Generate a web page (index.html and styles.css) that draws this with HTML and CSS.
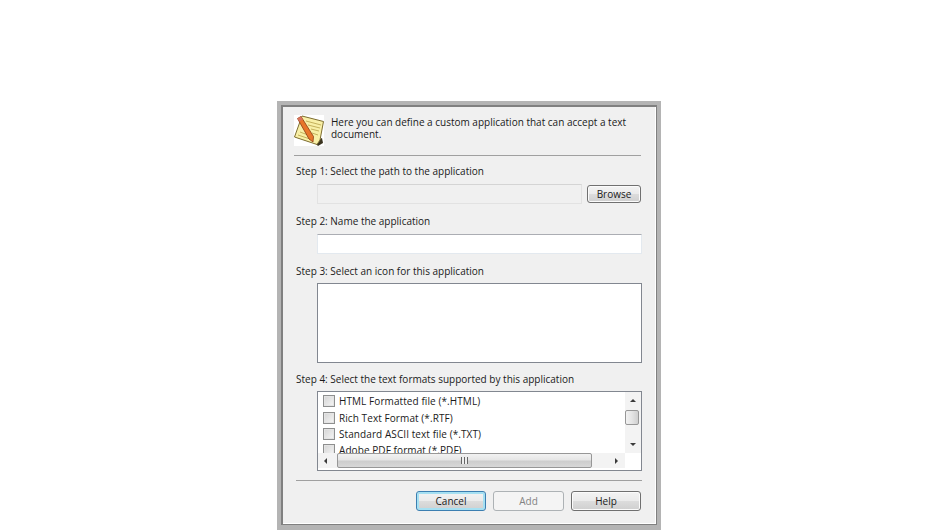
FILE: index.html
```html
<!DOCTYPE html>
<html lang="en">
<head>
  <meta charset="UTF-8" />
  <title>Custom application</title>
  <link rel="stylesheet" href="styles.css">
</head>
<body>

<div class="dialog">
  <div class="inner">
    <div class="intro">
      <svg class="note-icon" width="30" height="31" viewBox="0 0 30 31">
        <rect width="30" height="31" fill="#fff"/>
        <path d="M20 27 L28 23 L29 28 L24 31 Z" fill="#3a3320"/>
        <path d="M8 1 L29.5 6.5 L26 25 L23 29.5 L0.5 22 Z" fill="#f8efa6" stroke="#7d6d30"/>
        <path d="M12 6 L27 10 M14 10 L26 13 M17 14 L25 16 M18 18 L24 20 M6 17 L14 20 M4 20 L19 25" stroke="#c4b15c"/>
        <path d="M3.5 3.5 L7 1.5 L19.5 21.5 L19 27 L15 24 Z" fill="#e8762a" stroke="#8a3b14" stroke-width="0.8"/>
        <path d="M3.5 3.5 L7 1.5 L8.8 4.5 L5.3 6.5 Z" fill="#d9735e"/>
      </svg>
      <p class="intro-text">Here you can define a custom application that can accept a text document.</p>
    </div>
    <hr class="rule rule-top">

    <label class="step step-one">Step 1: Select the path to the application</label>
    <div class="path-row">
      <input class="field field-off" type="text" disabled>
      <button class="btn browse">Browse</button>
    </div>

    <label class="step">Step 2: Name the application</label>
    <input class="field name" type="text">

    <label class="step">Step 3: Select an icon for this application</label>
    <div class="icon-box"></div>

    <label class="step step-four">Step 4: Select the text formats supported by this application</label>
    <div class="formats">
      <div class="format-main">
        <ul class="format-list">
          <li><span class="check"></span>HTML Formatted file (*.HTML)</li>
          <li><span class="check"></span>Rich Text Format (*.RTF)</li>
          <li><span class="check"></span>Standard ASCII text file (*.TXT)</li>
          <li><span class="check"></span>Adobe PDF format (*.PDF)</li>
        </ul>
        <div class="vscroll">
          <span class="arrow up"></span>
          <span class="vthumb"></span>
          <span class="arrow down"></span>
        </div>
      </div>
      <div class="hscroll">
        <span class="arrow left"></span>
        <span class="hthumb"><span class="grip"></span></span>
        <span class="arrow right"></span>
      </div>
    </div>

    <hr class="rule rule-low">
    <div class="actions">
      <button class="btn cancel">Cancel</button>
      <button class="btn add" disabled>Add</button>
      <button class="btn help">Help</button>
    </div>
  </div>
</div>

</body>
</html>
```
FILE: styles.css
```css
html, body {
  margin: 0;
  height: 530px;
  overflow: hidden;
  background: #fff;
}
body {
  font-family: "Open Sans", sans-serif;
  font-size: 10px;
  color: #1a1a1a;
  padding-top: 101px;
  box-sizing: border-box;
}
.dialog {
  width: 384px;
  height: 429px;
  margin-left: 277px;
  box-sizing: border-box;
  border: 4px solid #b4b4b4;
  border-bottom-width: 5px;
}
.inner {
  height: 100%;
  box-sizing: border-box;
  background: #f0f0f0;
  border: 2px solid #808080;
  border-right-width: 1px;
  border-bottom-width: 1px;
  box-shadow: inset -1px -1px 0 #fff;
  padding: 8px 0 0 11px;
}
.intro {
  display: flex;
  gap: 7px;
  height: 31px;
}
.intro-text {
  margin: 1px 0 0;
  line-height: 12px;
  width: 300px;
}
.rule {
  border: 0;
  border-top: 1px solid #a0a0a0;
  margin: 0;
}
.rule-top {
  width: 347px;
  margin-top: 9px;
}
.rule-low {
  width: 346px;
  margin: 9px 0 0 2px;
}
.step {
  display: block;
  height: 15px;
  line-height: 15px;
  margin: 10px 0 4px 2px;
}
.step-one {
  margin-top: 8px;
  margin-bottom: 5px;
}
.step-four {
  margin-top: 9px;
}
.field {
  display: block;
  box-sizing: border-box;
  height: 20px;
  margin: 0;
  padding: 0;
  border: 1px solid #e3e9ef;
  border-top-color: #abadb3;
  background: #fff;
}
.name {
  width: 325px;
  margin-left: 23px;
  margin-top: 5px;
}
.path-row {
  display: flex;
  gap: 5px;
  margin-left: 23px;
}
.field-off {
  width: 265px;
  background: #f0f0f0;
  border-color: #e2e2e2;
  border-top-color: #d4d4d4;
}
.btn {
  font: inherit;
  box-sizing: border-box;
  height: 20px;
  padding: 0;
  color: #1a1a1a;
  border: 1px solid #707070;
  border-radius: 3px;
  background: linear-gradient(#f3f3f3, #ebebeb 48%, #dcdcdc 52%, #cfcfcf);
  box-shadow: inset 0 0 0 1px #fbfbfb;
}
.browse {
  width: 54px;
  height: 18px;
  margin-top: 1px;
}
.icon-box {
  box-sizing: border-box;
  width: 325px;
  height: 80px;
  margin-left: 23px;
  background: #fff;
  border: 1px solid #828790;
}
.formats {
  box-sizing: border-box;
  width: 325px;
  height: 80px;
  margin-left: 23px;
  background: #fff;
  border: 1px solid #828790;
}
.format-main {
  display: flex;
  height: 61px;
}
.format-list {
  list-style: none;
  flex: 1;
  margin: 0;
  padding: 1px 0 0 5px;
  overflow: hidden;
  letter-spacing: 0.08px;
}
.format-list li {
  display: flex;
  align-items: center;
  gap: 4px;
  height: 16.4px;
}
.check {
  box-sizing: border-box;
  width: 12px;
  height: 12px;
  flex: none;
  border: 1px solid #8e8f8f;
  background: linear-gradient(135deg, #d4d4d4, #f6f6f6);
  box-shadow: inset 0 0 0 1px #e4e4e4;
}
.vscroll {
  width: 16px;
  display: flex;
  flex-direction: column;
  align-items: center;
  justify-content: space-between;
  background: #f3f3f3;
  position: relative;
}
.vthumb {
  position: absolute;
  left: 0;
  top: 18px;
  box-sizing: border-box;
  width: 14px;
  height: 15px;
  border: 1px solid #979797;
  border-radius: 2px;
  background: linear-gradient(90deg, #f2f2f2, #e4e4e4 50%, #cfcfcf);
}
.hscroll {
  display: flex;
  align-items: center;
  justify-content: space-between;
  box-sizing: border-box;
  width: 307px;
  height: 15px;
  padding: 0 7px 0 6px;
  background: #f3f3f3;
  position: relative;
}
.hthumb {
  position: absolute;
  left: 19px;
  top: 0;
  box-sizing: border-box;
  width: 255px;
  height: 15px;
  border: 1px solid #979797;
  border-radius: 2px;
  background: linear-gradient(#f2f2f2, #e6e6e6 45%, #cdcdcd 55%, #d8d8d8);
}
.grip {
  position: absolute;
  left: 123px;
  top: 3px;
  width: 7px;
  height: 7px;
  background: repeating-linear-gradient(90deg, #666 0 1px, #eee 1px 3px);
}
.arrow {
  width: 0;
  height: 0;
  border: 3px solid transparent;
}
.up {
  margin-top: 7px;
  border-top-width: 0;
  border-bottom: 3px solid #3b3b3b;
}
.down {
  margin-bottom: 7px;
  border-bottom-width: 0;
  border-top: 3px solid #3b3b3b;
}
.left {
  border-left-width: 0;
  border-right: 3px solid #3b3b3b;
}
.right {
  border-right-width: 0;
  border-left: 3px solid #3b3b3b;
}
.actions {
  display: flex;
  margin: 10px 0 0 122px;
}
.cancel {
  width: 70px;
  border-color: #3c7fb1;
  box-shadow: inset 0 0 0 2px #a6e0f2;
}
.add {
  width: 71px;
  margin-left: 7px;
  color: #838383;
  background: #f4f4f4;
  border-color: #adb2b5;
  box-shadow: none;
}
.help {
  width: 70px;
  margin-left: 7px;
}
```
